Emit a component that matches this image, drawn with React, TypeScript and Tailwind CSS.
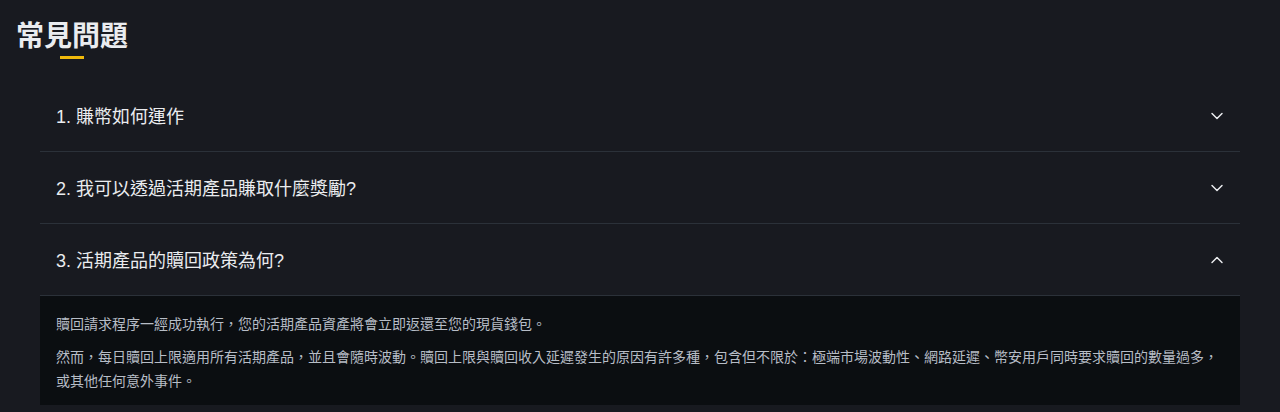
import { useState } from "react";

const FONT = {
  fontFamily: '"Liberation Sans", Arial, "Noto Sans CJK TC", sans-serif',
};

const FAQS = [
  { q: "1. 賺幣如何運作", a: [] as string[] },
  { q: "2. 我可以透過活期產品賺取什麼獎勵?", a: [] as string[] },
  {
    q: "3. 活期產品的贖回政策為何?",
    a: [
      "贖回請求程序一經成功執行，您的活期產品資產將會立即返還至您的現貨錢包。",
      "然而，每日贖回上限適用所有活期產品，並且會隨時波動。贖回上限與贖回收入延遲發生的原因有許多種，包含但不限於：極端市場波動性、網路延遲、幣安用戶同時要求贖回的數量過多，或其他任何意外事件。",
    ],
  },
];

function Chevron({ up }: { up: boolean }) {
  return (
    <svg
      viewBox="0 0 24 24"
      className="w-5 h-5 shrink-0"
      fill="none"
      stroke="#EAECEF"
      strokeWidth={1.75}
      strokeLinecap="round"
      strokeLinejoin="round"
    >
      {up ? <path d="M6 15l6-6 6 6" /> : <path d="M6 9l6 6 6-6" />}
    </svg>
  );
}

export default function App() {
  const [open, setOpen] = useState(2);

  return (
    <div className="min-h-[412px] bg-[#181A20] overflow-hidden" style={FONT}>
      <div className="pt-[19px] pl-4">
        <div className="inline-flex flex-col items-center">
          <h2 className="text-[28px] leading-[36px] font-semibold text-[#EAECEF]">常見問題</h2>
          <div className="mt-[1px] w-6 h-[3px] bg-[#F0B90B]" />
        </div>
      </div>

      <div className="mx-10 mt-[21px]">
        {FAQS.map((f, i) => {
          const isOpen = open === i;
          return (
            <div key={i} className={i < FAQS.length - 1 || isOpen ? "border-b border-[#2B3139]" : ""}>
              <button
                className="w-full h-[71px] flex items-center justify-between pl-4 pr-[13px] text-left"
                onClick={() => setOpen(isOpen ? -1 : i)}
              >
                <span className="text-[18px] leading-7 text-[#EAECEF] pt-[2px]">{f.q}</span>
                <Chevron up={isOpen} />
              </button>
            </div>
          );
        })}
        {open >= 0 && FAQS[open].a.length > 0 && (
          <div className="bg-[#0B0E11] px-4 pt-4 pb-3 text-sm leading-6 text-[#B7BDC6] [text-spacing-trim:space-all]">
            {FAQS[open].a.map((p, j) => (
              <p key={j} className={j > 0 ? "mt-[9px]" : ""}>
                {p}
              </p>
            ))}
          </div>
        )}
      </div>
    </div>
  );
}
